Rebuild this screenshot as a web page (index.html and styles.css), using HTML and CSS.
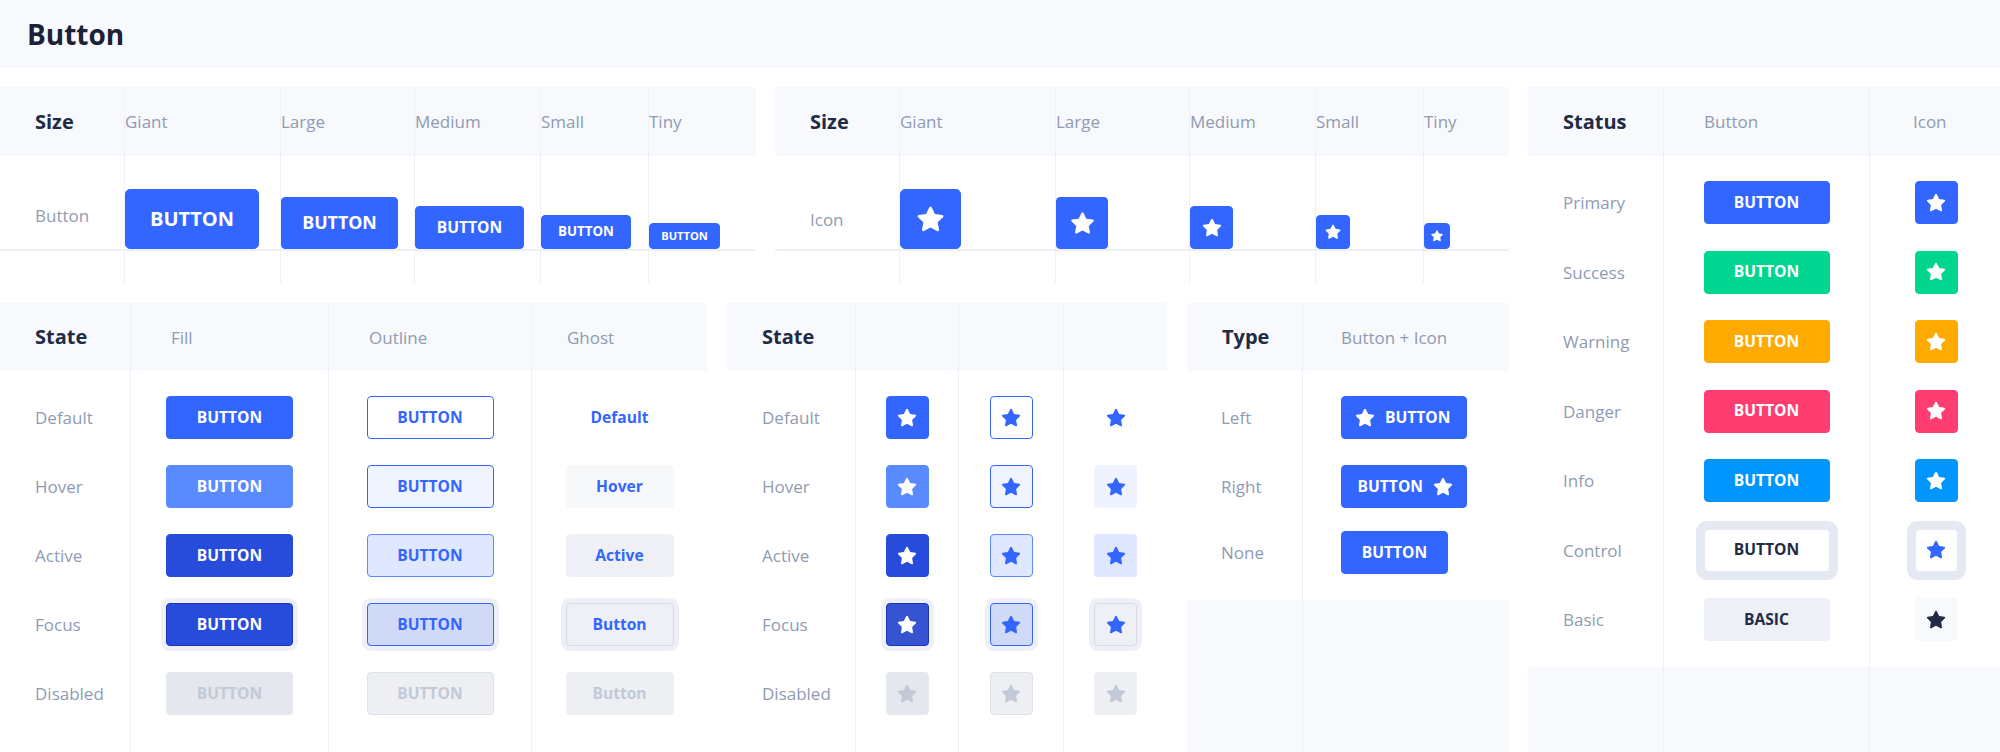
FILE: index.html
```html
<!DOCTYPE html>
<html lang="en">
<head>
<meta charset="utf-8">
<title>Button</title>
<link rel="stylesheet" href="styles.css">
</head>
<body>
<svg class="sprite" aria-hidden="true">
  <symbol id="star" viewBox="0 0 24 24"><path d="M17.56 21a1 1 0 0 1-.46-.11L12 18.22l-5.1 2.67a1 1 0 0 1-1.45-1.06l1-5.63-4.120-4a1 1 0 0 1-.25-1 1 1 0 0 1 .81-.68l5.7-.83 2.51-5.13a1 1 0 0 1 1.8 0l2.54 5.12 5.7.83a1 1 0 0 1 .81.68 1 1 0 0 1-.25 1l-4.12 4 1 5.63a1 1 0 0 1-.4 1 1 1 0 0 1-.62.18z"/></symbol>
</svg>

<header class="titlebar"><h1>Button</h1></header>

<main class="board">
  <div class="left">
    <div class="row row-top">
      <!-- Size / Button -->
      <section class="panel size p-size1">
        <div class="col col-label">
          <div class="th"><h2>Size</h2></div>
          <div class="sb sb-label"><span class="lbl">Button</span></div>
        </div>
        <div class="col">
          <div class="th"><span class="sub">Giant</span></div>
          <div class="sb"><button class="btn fill giant">BUTTON</button></div>
        </div>
        <div class="col">
          <div class="th"><span class="sub">Large</span></div>
          <div class="sb"><button class="btn fill large">BUTTON</button></div>
        </div>
        <div class="col">
          <div class="th"><span class="sub">Medium</span></div>
          <div class="sb"><button class="btn fill medium">BUTTON</button></div>
        </div>
        <div class="col">
          <div class="th"><span class="sub">Small</span></div>
          <div class="sb"><button class="btn fill small">BUTTON</button></div>
        </div>
        <div class="col">
          <div class="th"><span class="sub">Tiny</span></div>
          <div class="sb"><button class="btn fill tiny">BUTTON</button></div>
        </div>
      </section>

      <!-- Size / Icon -->
      <section class="panel size p-size2">
        <div class="col col-label">
          <div class="th"><h2>Size</h2></div>
          <div class="sb sb-label sb-label-icon"><span class="lbl">Icon</span></div>
        </div>
        <div class="col">
          <div class="th"><span class="sub">Giant</span></div>
          <div class="sb"><button class="btn fill giant ico" aria-label="star"><svg class="star s-giant"><use href="#star"/></svg></button></div>
        </div>
        <div class="col">
          <div class="th"><span class="sub">Large</span></div>
          <div class="sb"><button class="btn fill large ico" aria-label="star"><svg class="star s-large"><use href="#star"/></svg></button></div>
        </div>
        <div class="col">
          <div class="th"><span class="sub">Medium</span></div>
          <div class="sb"><button class="btn fill medium ico" aria-label="star"><svg class="star s-medium"><use href="#star"/></svg></button></div>
        </div>
        <div class="col">
          <div class="th"><span class="sub">Small</span></div>
          <div class="sb"><button class="btn fill small ico" aria-label="star"><svg class="star s-small"><use href="#star"/></svg></button></div>
        </div>
        <div class="col">
          <div class="th"><span class="sub">Tiny</span></div>
          <div class="sb"><button class="btn fill tiny ico" aria-label="star"><svg class="star s-tiny"><use href="#star"/></svg></button></div>
        </div>
      </section>
    </div>

    <div class="row row-bottom">
      <!-- State / buttons -->
      <section class="panel p-state">
        <div class="col col-label">
          <div class="th"><h2>State</h2></div>
          <div class="tb tb-state">
            <div class="cell">Default</div>
            <div class="cell">Hover</div>
            <div class="cell">Active</div>
            <div class="cell">Focus</div>
            <div class="cell">Disabled</div>
          </div>
        </div>
        <div class="col">
          <div class="th th-pad40"><span class="sub">Fill</span></div>
          <div class="tb tb-state">
            <div class="cell"><button class="btn fill medium w127">BUTTON</button></div>
            <div class="cell"><button class="btn fill hover medium w127">BUTTON</button></div>
            <div class="cell"><button class="btn fill active medium w127">BUTTON</button></div>
            <div class="cell"><button class="btn fill focus medium w127">BUTTON</button></div>
            <div class="cell"><button class="btn fill disabled medium w127">BUTTON</button></div>
          </div>
        </div>
        <div class="col">
          <div class="th th-pad40"><span class="sub">Outline</span></div>
          <div class="tb tb-state">
            <div class="cell"><button class="btn outline medium w127">BUTTON</button></div>
            <div class="cell"><button class="btn outline hover medium w127">BUTTON</button></div>
            <div class="cell"><button class="btn outline active medium w127">BUTTON</button></div>
            <div class="cell"><button class="btn outline focus medium w127">BUTTON</button></div>
            <div class="cell"><button class="btn outline disabled medium w127">BUTTON</button></div>
          </div>
        </div>
        <div class="col">
          <div class="th th-pad35"><span class="sub">Ghost</span></div>
          <div class="tb tb-state">
            <div class="cell"><button class="btn ghost medium w108">Default</button></div>
            <div class="cell"><button class="btn ghost hover medium w108">Hover</button></div>
            <div class="cell"><button class="btn ghost active medium w108">Active</button></div>
            <div class="cell"><button class="btn ghost focus medium w108">Button</button></div>
            <div class="cell"><button class="btn ghost disabled medium w108">Button</button></div>
          </div>
        </div>
      </section>

      <!-- State / icons -->
      <section class="panel p-state-icon">
        <div class="col col-label">
          <div class="th"><h2>State</h2></div>
          <div class="tb tb-state">
            <div class="cell">Default</div>
            <div class="cell">Hover</div>
            <div class="cell">Active</div>
            <div class="cell">Focus</div>
            <div class="cell">Disabled</div>
          </div>
        </div>
        <div class="col">
          <div class="th"></div>
          <div class="tb tb-state">
            <div class="cell"><button class="btn fill medium ico" aria-label="star"><svg class="star s-medium"><use href="#star"/></svg></button></div>
            <div class="cell"><button class="btn fill hover medium ico" aria-label="star"><svg class="star s-medium"><use href="#star"/></svg></button></div>
            <div class="cell"><button class="btn fill active medium ico" aria-label="star"><svg class="star s-medium"><use href="#star"/></svg></button></div>
            <div class="cell"><button class="btn fill focus medium ico" aria-label="star"><svg class="star s-medium"><use href="#star"/></svg></button></div>
            <div class="cell"><button class="btn fill disabled medium ico" aria-label="star"><svg class="star s-medium"><use href="#star"/></svg></button></div>
          </div>
        </div>
        <div class="col">
          <div class="th"></div>
          <div class="tb tb-state">
            <div class="cell"><button class="btn outline medium ico" aria-label="star"><svg class="star s-medium"><use href="#star"/></svg></button></div>
            <div class="cell"><button class="btn outline hover medium ico" aria-label="star"><svg class="star s-medium"><use href="#star"/></svg></button></div>
            <div class="cell"><button class="btn outline active medium ico" aria-label="star"><svg class="star s-medium"><use href="#star"/></svg></button></div>
            <div class="cell"><button class="btn outline focus medium ico" aria-label="star"><svg class="star s-medium"><use href="#star"/></svg></button></div>
            <div class="cell"><button class="btn outline disabled medium ico" aria-label="star"><svg class="star s-medium"><use href="#star"/></svg></button></div>
          </div>
        </div>
        <div class="col">
          <div class="th"></div>
          <div class="tb tb-state">
            <div class="cell"><button class="btn ghost medium ico" aria-label="star"><svg class="star s-medium"><use href="#star"/></svg></button></div>
            <div class="cell"><button class="btn ghost hover medium ico" aria-label="star"><svg class="star s-medium"><use href="#star"/></svg></button></div>
            <div class="cell"><button class="btn ghost active medium ico" aria-label="star"><svg class="star s-medium"><use href="#star"/></svg></button></div>
            <div class="cell"><button class="btn ghost focus medium ico" aria-label="star"><svg class="star s-medium"><use href="#star"/></svg></button></div>
            <div class="cell"><button class="btn ghost disabled medium ico" aria-label="star"><svg class="star s-medium"><use href="#star"/></svg></button></div>
          </div>
        </div>
      </section>

      <!-- Type -->
      <section class="panel p-type">
        <div class="col col-label">
          <div class="th"><h2>Type</h2></div>
          <div class="tb">
            <div class="cell">Left</div>
            <div class="cell">Right</div>
            <div class="cell cell-tight">None</div>
          </div>
        </div>
        <div class="col">
          <div class="th th-pad38"><span class="sub">Button + Icon</span></div>
          <div class="tb">
            <div class="cell cell-start"><button class="btn fill medium icon-left"><svg class="star s-medium"><use href="#star"/></svg><span>BUTTON</span></button></div>
            <div class="cell cell-start"><button class="btn fill medium icon-right"><span>BUTTON</span><svg class="star s-medium"><use href="#star"/></svg></button></div>
            <div class="cell cell-start cell-tight"><button class="btn fill medium w107">BUTTON</button></div>
          </div>
        </div>
      </section>
    </div>
  </div>

  <!-- Status -->
  <section class="panel p-status">
    <div class="col col-label">
      <div class="th th-status"><h2>Status</h2></div>
      <div class="tb tb-status">
        <div class="cell">Primary</div>
        <div class="cell">Success</div>
        <div class="cell">Warning</div>
        <div class="cell">Danger</div>
        <div class="cell">Info</div>
        <div class="cell">Control</div>
        <div class="cell">Basic</div>
      </div>
    </div>
    <div class="col">
      <div class="th th-status th-pad40"><span class="sub">Button</span></div>
      <div class="tb tb-status">
        <div class="cell"><button class="btn fill medium w126">BUTTON</button></div>
        <div class="cell"><button class="btn success medium w126">BUTTON</button></div>
        <div class="cell"><button class="btn warning medium w126">BUTTON</button></div>
        <div class="cell"><button class="btn danger medium w126">BUTTON</button></div>
        <div class="cell"><button class="btn info medium w126">BUTTON</button></div>
        <div class="cell"><button class="btn control medium w126">BUTTON</button></div>
        <div class="cell"><button class="btn basic medium w126">BASIC</button></div>
      </div>
    </div>
    <div class="col">
      <div class="th th-status th-pad43"><span class="sub">Icon</span></div>
      <div class="tb tb-status">
        <div class="cell"><button class="btn fill medium ico" aria-label="star"><svg class="star s-medium"><use href="#star"/></svg></button></div>
        <div class="cell"><button class="btn success medium ico" aria-label="star"><svg class="star s-medium"><use href="#star"/></svg></button></div>
        <div class="cell"><button class="btn warning medium ico" aria-label="star"><svg class="star s-medium"><use href="#star"/></svg></button></div>
        <div class="cell"><button class="btn danger medium ico" aria-label="star"><svg class="star s-medium"><use href="#star"/></svg></button></div>
        <div class="cell"><button class="btn info medium ico" aria-label="star"><svg class="star s-medium"><use href="#star"/></svg></button></div>
        <div class="cell"><button class="btn control control-ico medium ico" aria-label="star"><svg class="star s-medium"><use href="#star"/></svg></button></div>
        <div class="cell"><button class="btn basic-ico medium ico" aria-label="star"><svg class="star s-medium"><use href="#star"/></svg></button></div>
      </div>
    </div>
  </section>
</main>
</body>
</html>
```

FILE: styles.css
```css
* { box-sizing: border-box; }

html, body {
  margin: 0;
  overflow: hidden;
}

body {
  width: 2000px;
  height: 752px;
  background: #ffffff;
  font-family: "Open Sans", "Noto Sans", "Liberation Sans", sans-serif;
  color: #222b45;
}

.sprite { display: none; }

/* ---------- title ---------- */
.titlebar {
  height: 68px;
  background: #f7f9fc;
  display: flex;
  align-items: center;
  padding-left: 27px;
}
.titlebar h1 {
  margin: 0;
  font-size: 28px;
  line-height: 1;
  font-weight: 700;
  color: #1a2138;
}

/* ---------- board layout ---------- */
.board {
  display: flex;
  gap: 19px;
  margin-top: 19px;
}
.left {
  flex: none;
  width: 1509px;
  display: flex;
  flex-direction: column;
  gap: 20px;
}
.row { display: flex; }
.row-top { gap: 19px; }
.row-bottom { gap: 20px; }

.panel {
  flex: none;
  display: grid;
  background: #f7f9fc;
}
.p-size1 { width: 756px; grid-template-columns: 124px 156px 134px 126px 108px 1fr; background: #fff; }
.p-size2 { width: 734px; grid-template-columns: 124px 156px 134px 126px 108px 1fr; background: #fff; }
.p-state { width: 707px; grid-template-columns: 130px 198px 203px 1fr; }
.p-state-icon { width: 440px; grid-template-columns: 128px 103px 105px 1fr; }
.p-type { width: 322px; grid-template-columns: 115px 1fr; }
.p-status { width: 474px; grid-template-columns: 135px 206px 1fr; }

.col {
  display: flex;
  flex-direction: column;
  min-width: 0;
  border-left: 1px solid #edf1f7;
}
.col-label { border-left: none; }

/* ---------- header cells ---------- */
.th {
  flex: none;
  height: 68px;
  background: #f7f9fc;
  display: flex;
  align-items: center;
}
.size .th, .th-status { height: 69px; }
.col-label .th { padding-left: 35px; }
.th-pad35 { padding-left: 35px; }
.th-pad38 { padding-left: 38px; }
.th-pad40 { padding-left: 40px; }
.th-pad43 { padding-left: 43px; }

h2 {
  margin: 0;
  font-size: 20px;
  line-height: 1;
  font-weight: 700;
  color: #222b45;
}
.sub {
  font-size: 17px;
  line-height: 1;
  font-weight: 400;
  color: #8f9bb3;
  white-space: nowrap;
}

/* ---------- size panels ---------- */
.sb {
  flex: none;
  height: 95px;
  margin-bottom: 32px;
  background: #fff;
  border-bottom: 2px solid #edf1f7;
  display: flex;
  align-items: flex-end;
}
.sb-label {
  align-items: center;
  padding: 26px 0 0 35px;
}
.sb-label-icon { padding-top: 34px; }
.lbl {
  font-size: 17px;
  line-height: 1;
  color: #8f9bb3;
}

/* ---------- table bodies ---------- */
.tb {
  flex: none;
  background: #fff;
  display: flex;
  flex-direction: column;
  gap: 26px;
  padding: 25px 0 26px;
}
.tb-state { padding-bottom: 44px; }
.tb-status { gap: 26.5px; }

.cell {
  flex: none;
  height: 43px;
  display: flex;
  align-items: center;
  justify-content: center;
}
.col-label .cell {
  justify-content: flex-start;
  padding-left: 35px;
  font-size: 17px;
  color: #8f9bb3;
}
.p-type .col-label .cell { padding-left: 34px; }
.cell-start { justify-content: flex-start; padding-left: 38px; }
.cell-tight { margin-top: -3px; }

/* ---------- buttons ---------- */
.btn {
  display: inline-flex;
  align-items: center;
  justify-content: center;
  flex: none;
  margin: 0;
  padding: 0;
  border: 1px solid transparent;
  border-radius: 4px;
  font-family: inherit;
  font-weight: 700;
  line-height: 1;
  color: #fff;
  white-space: nowrap;
}

.giant  { width: 134px; height: 60px; font-size: 20px; border-radius: 5px; }
.large  { width: 117px; height: 52px; font-size: 17.8px; }
.medium { width: 109px; height: 43px; font-size: 15.6px; }
.small  { width: 90px;  height: 34px; font-size: 13.3px; }
.tiny   { width: 71px;  height: 26px; font-size: 11.1px; }

.w126 { width: 126px; }
.w127 { width: 127px; }
.w107 { width: 107px; }
.w108 { width: 108px; }

.ico.giant  { width: 61px; }
.ico.large  { width: 52px; }
.ico.medium { width: 43px; }
.ico.small  { width: 34px; }
.ico.tiny   { width: 26px; }

.star { flex: none; fill: currentColor; }
.s-giant  { width: 31px; height: 31px; }
.s-large  { width: 27px; height: 27px; }
.s-medium { width: 22px; height: 22px; }
.s-small  { width: 18px; height: 18px; }
.s-tiny   { width: 14px; height: 14px; }

.icon-left {
  width: 126px;
  justify-content: flex-start;
  padding-left: 12px;
  gap: 9px;
}
.icon-right {
  width: 126px;
  justify-content: flex-end;
  padding-right: 12px;
  gap: 9px;
}

/* fill */
.fill { background: #3366ff; border-color: #3366ff; color: #fff; }
.fill.hover { background: #598bff; border-color: #598bff; }
.fill.active { background: #274bdb; border-color: #274bdb; }
.fill.focus { background: #274bdb; border-color: #1a34b8; box-shadow: 0 0 0 5px #edf1f7; }
.fill.focus.ico { background: #3654d1; }
.fill.disabled { background: #e4e7ed; border-color: #e4e7ed; color: #c2c9d7; }

/* outline */
.outline { background: #fff; border-color: #3366ff; color: #3366ff; }
.outline.hover { background: #f0f4ff; }
.outline.active { background: #e0e8ff; border-color: #598bff; }
.outline.focus { background: #d0daf6; border-color: #3366ff; box-shadow: 0 0 0 5px #edf1f7; }
.outline.disabled { background: #edeff3; border-color: #dde1e8; color: #c2c9d7; }

/* ghost */
.ghost { background: transparent; border-color: transparent; color: #3366ff; }
.ghost.hover { background: #f7f8fa; }
.ghost.active { background: #eef0f5; }
.ghost.focus { background: #eef0f5; border-color: #d5dae3; box-shadow: 0 0 0 5px #edf1f7; }
.ghost.disabled { background: #edeff3; color: #c2c9d7; }
.ghost.ico.hover { background: #eff3ff; }
.ghost.ico.active { background: #dfe7ff; }
.ghost.ico.focus { background: #eef0f5; }

/* status */
.success { background: #00d68f; border-color: #00d68f; }
.warning { background: #ffaa00; border-color: #ffaa00; }
.danger  { background: #ff3d71; border-color: #ff3d71; }
.info    { background: #0095ff; border-color: #0095ff; }
.control {
  background: #fff;
  border-color: #e4e9f2;
  color: #222b45;
  box-shadow: 0 0 0 8px #e4e9f2;
}
.control-ico { color: #3366ff; }
.basic { background: #edf1f7; border-color: #edf1f7; color: #222b45; }
.basic-ico { background: #f7f9fc; border-color: #f7f9fc; color: #222b45; }
```
